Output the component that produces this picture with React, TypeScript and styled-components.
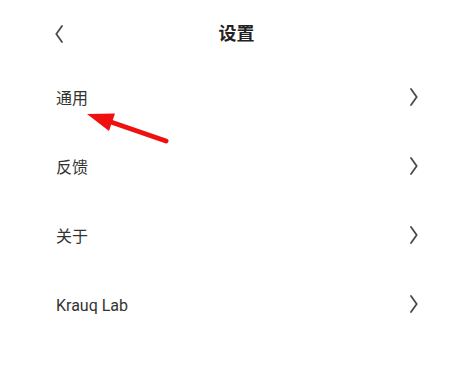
import React from "react";
import styled, { createGlobalStyle } from "styled-components";

const Global = createGlobalStyle`
  html, body { margin: 0; padding: 0; background: #ffffff; }
  body { font-family: Roboto, "Noto Sans CJK SC", "Noto Sans", sans-serif; }
`;

const Page = styled.div`
  position: relative;
  width: 462px;
  height: 371px;
  background: #ffffff;
  overflow: hidden;
`;

const Header = styled.header`
  display: flex;
  align-items: center;
  height: 67px;
  padding: 0 44px 0 55px;
  box-sizing: border-box;
`;

const IconBox = styled.div<{ $lift?: number }>`
  width: 8px;
  height: 18px;
  display: flex;
  flex: none;
  margin-bottom: ${(p) => (p.$lift ? p.$lift * 2 : 0)}px;
`;

const Title = styled.h1`
  flex: 1;
  margin: 0;
  text-align: center;
  font-size: 18px;
  font-weight: 700;
  color: #222222;
  line-height: 24px;
`;

const List = styled.ul`
  list-style: none;
  margin: -3px 0 0;
  padding: 0;
`;

const Row = styled.li`
  display: flex;
  align-items: center;
  justify-content: space-between;
  height: 69px;
  padding: 0 44px 0 56px;
  box-sizing: border-box;
`;

const Label = styled.span`
  font-size: 16px;
  color: #333333;
  line-height: 20px;
`;

const Overlay = styled.svg`
  position: absolute;
  left: 0;
  top: 0;
  pointer-events: none;
`;

const Chevron = ({ dir, lift }: { dir: "left" | "right"; lift?: number }) => (
  <IconBox $lift={lift}>
    <svg width="8" height="18" viewBox="0 0 8 18">
      <polyline
        points={dir === "left" ? "7,1 1.3,9 7,17" : "1,1 6.7,9 1,17"}
        fill="none"
        stroke="#4a4a4a"
        strokeWidth="1.8"
        strokeLinecap="round"
        strokeLinejoin="round"
      />
    </svg>
  </IconBox>
);

const items = ["通用", "反馈", "关于", "Krauq Lab"];

export default function App() {
  return (
    <Page>
      <Global />
      <Header>
        <Chevron dir="left" />
        <Title>设置</Title>
        <IconBox />
      </Header>
      <List>
        {items.map((t) => (
          <Row key={t}>
            <Label>{t}</Label>
            <Chevron dir="right" lift={2} />
          </Row>
        ))}
      </List>
      <Overlay width="462" height="371" viewBox="0 0 462 371">
        <line x1="108" y1="121" x2="166" y2="141" stroke="#f01010" strokeWidth="5" strokeLinecap="round" />
        <polygon points="87,114 115,113.5 109,131" fill="#f01010" />
      </Overlay>
    </Page>
  );
}
